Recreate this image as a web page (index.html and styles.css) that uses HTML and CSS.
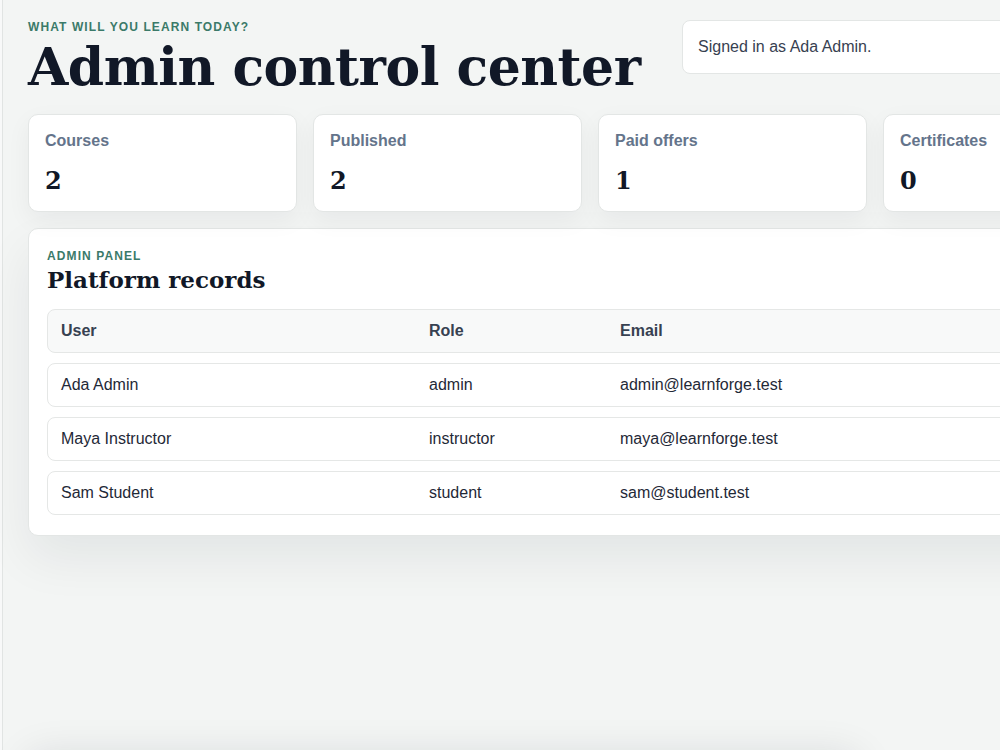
FILE: index.html
```html
<!DOCTYPE html>
<html lang="en">

<head>
    <meta charset="UTF-8">
    <title>Admin control center</title>
    <link rel="stylesheet" href="styles.css">
</head>

<body>
    <div class="frame">
        <div class="page">
            <header class="top">
                <div class="title-block">
                    <p class="eyebrow">What will you learn today?</p>
                    <h1 class="title">Admin control center</h1>
                </div>
                <div class="session">Signed in as Ada Admin.</div>
            </header>

            <ul class="stats">
                <li class="stat">
                    <span class="stat-label">Courses</span>
                    <strong class="stat-value">2</strong>
                </li>
                <li class="stat">
                    <span class="stat-label">Published</span>
                    <strong class="stat-value">2</strong>
                </li>
                <li class="stat">
                    <span class="stat-label">Paid offers</span>
                    <strong class="stat-value">1</strong>
                </li>
                <li class="stat">
                    <span class="stat-label">Certificates</span>
                    <strong class="stat-value">0</strong>
                </li>
            </ul>

            <section class="panel">
                <p class="eyebrow">Admin panel</p>
                <h2 class="panel-title">Platform records</h2>
                <div class="records">
                    <div class="row head">
                        <span>User</span>
                        <span>Role</span>
                        <span>Email</span>
                        <span></span>
                    </div>
                    <div class="row">
                        <span>Ada Admin</span>
                        <span>admin</span>
                        <span>admin@learnforge.test</span>
                        <span></span>
                    </div>
                    <div class="row">
                        <span>Maya Instructor</span>
                        <span>instructor</span>
                        <span>maya@learnforge.test</span>
                        <span></span>
                    </div>
                    <div class="row">
                        <span>Sam Student</span>
                        <span>student</span>
                        <span>sam@student.test</span>
                        <span></span>
                    </div>
                </div>
            </section>

            <section class="panel next"></section>
        </div>
    </div>
</body>

</html>
```

FILE: styles.css
```css
* {
    margin: 0;
    padding: 0;
    box-sizing: border-box;
    list-style: none;
}

html,
body {
    height: 100%;
    overflow: hidden;
}

body {
    background-color: #f8f9f9;
    font-family: "Liberation Sans", Arial, sans-serif;
    color: #1f2937;
}

.frame {
    margin-left: 2px;
    min-height: 100%;
    border-left: 1px solid #e1e4e3;
    background-color: #f3f5f4;
}

.page {
    width: 1149px;
    padding: 20px 0 0 25px;
}

.top {
    display: flex;
    justify-content: space-between;
    align-items: flex-start;
}

.eyebrow {
    font-size: 12px;
    line-height: 14px;
    font-weight: bold;
    letter-spacing: 1.1px;
    text-transform: uppercase;
    color: #3b7a69;
}

.title {
    margin-top: 2px;
    font-family: "DejaVu Serif", Georgia, serif;
    font-size: 52px;
    line-height: 62px;
    font-weight: bold;
    letter-spacing: -0.5px;
    color: #111827;
}

.session {
    width: 470px;
    height: 54px;
    padding: 0 15px;
    display: flex;
    align-items: center;
    background-color: #fff;
    border: 1px solid #e3e6e5;
    border-radius: 8px;
    font-size: 16px;
    color: #374151;
}

.stats {
    margin-top: 16px;
    display: grid;
    grid-template-columns: repeat(4, 269px);
    gap: 16px;
}

.stat {
    height: 98px;
    padding: 17px 16px 0;
    display: flex;
    flex-direction: column;
    gap: 17px;
    background-color: #fff;
    border: 1px solid #e3e6e5;
    border-radius: 10px;
    box-shadow: 0 8px 24px rgba(17, 24, 39, 0.05);
}

.stat-label {
    font-size: 16px;
    line-height: 18px;
    font-weight: bold;
    color: #64748b;
}

.stat-value {
    font-family: "DejaVu Serif", Georgia, serif;
    font-size: 24px;
    line-height: 28px;
    color: #111827;
}

.panel {
    margin-top: 16px;
    padding: 20px 18px 20px;
    background-color: #fff;
    border: 1px solid #e3e6e5;
    border-radius: 10px;
    box-shadow: 0 22px 50px rgba(17, 24, 39, 0.07);
}

.panel-title {
    margin-top: 2px;
    font-family: "DejaVu Serif", Georgia, serif;
    font-size: 23px;
    line-height: 30px;
    font-weight: bold;
    color: #111827;
}

.records {
    margin-top: 14px;
    display: flex;
    flex-direction: column;
    gap: 10px;
}

.row {
    height: 44px;
    display: grid;
    grid-template-columns: 368px 191px 300px 1fr;
    align-items: center;
    padding-left: 13px;
    border: 1px solid #e5e7e6;
    border-radius: 8px;
    font-size: 16px;
    color: #1f2937;
}

.row.head {
    background-color: #f8f9f9;
    font-weight: bold;
    color: #374151;
}

.panel.next {
    margin-top: 220px;
    width: 830px;
    height: 200px;
    box-shadow: 0 0 40px rgba(17, 24, 39, 0.12);
}
```
